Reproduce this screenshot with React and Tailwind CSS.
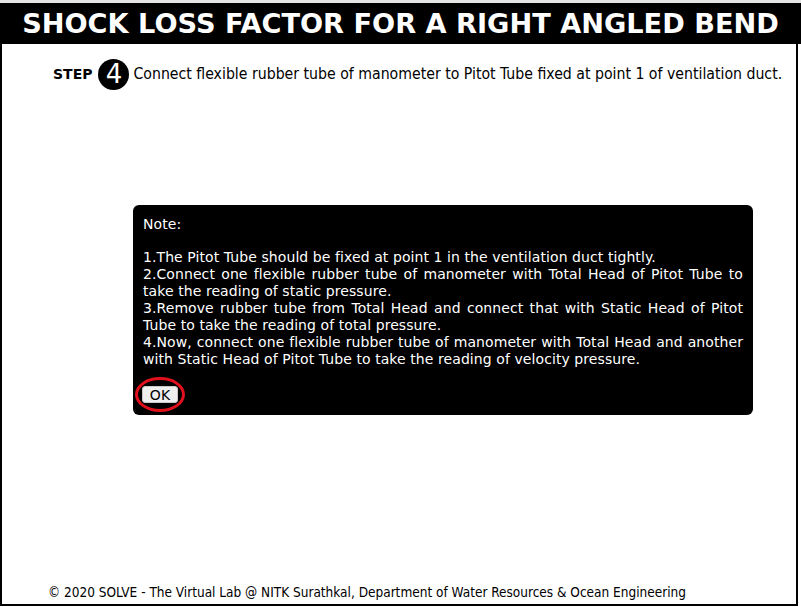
import React from "react";

const notes = [
  "1.The Pitot Tube should be fixed at point 1 in the ventilation duct tightly.",
  "2.Connect one flexible rubber tube of manometer with Total Head of Pitot Tube to take the reading of static pressure.",
  "3.Remove rubber tube from Total Head and connect that with Static Head of Pitot Tube to take the reading of total pressure.",
  "4.Now, connect one flexible rubber tube of manometer with Total Head and another with Static Head of Pitot Tube to take the reading of velocity pressure.",
];

const App = () => {
  return (
    <div className="w-[801px] h-[607px] bg-white flex flex-col font-['DejaVu_Sans',sans-serif]">
      <div className="h-[3px] bg-[#e4e4e4]" />
      <div className="h-[41px] bg-black text-white text-center font-bold text-[27.2px] leading-[41px]">
        SHOCK LOSS FACTOR FOR A RIGHT ANGLED BEND
      </div>
      <div className="flex-1 mr-[3px] mb-[1px] border-x-2 border-b-2 border-black flex flex-col">
        <div className="flex items-center mt-[14px] pl-[51px] h-[32px]">
          <span className="font-bold text-[14px] text-black">STEP</span>
          <span className="ml-[6px] w-[31px] h-[31px] rounded-full bg-black text-white flex items-center justify-center text-[26px] leading-none">
            4
          </span>
          <span className="ml-[4px] text-[15.7px] text-black font-['DejaVu_Sans_Condensed',sans-serif]">
            Connect flexible rubber tube of manometer to Pitot Tube fixed at point 1 of ventilation duct.
          </span>
        </div>
        <div className="mt-[115px] ml-[131px] w-[620px] h-[210px] bg-black rounded-[6px] px-[10px] pt-[11px] text-white text-[14px] tracking-[0.08px] leading-[17px]">
          <p>Note:</p>
          <div className="mt-[16px] text-justify">
            {notes.map((n) => (
              <p key={n}>{n}</p>
            ))}
          </div>
          <div className="mt-[9px] -ml-[8px] w-[50px] h-[35px] rounded-[50%] border-[3px] border-[#e0101c] flex items-center justify-center">
            <button className="bg-[#efefef] text-black text-[14px] leading-none h-[17px] w-[36px] rounded-[3px] border border-[#c8c8c8]">
              OK
            </button>
          </div>
        </div>
        <div className="mt-auto mb-[2px] pl-[46px] text-[13.5px] text-black font-['DejaVu_Sans_Condensed',sans-serif]">
          © 2020 SOLVE - The Virtual Lab @ NITK Surathkal, Department of Water Resources &amp; Ocean Engineering
        </div>
      </div>
    </div>
  );
};

export default App;
